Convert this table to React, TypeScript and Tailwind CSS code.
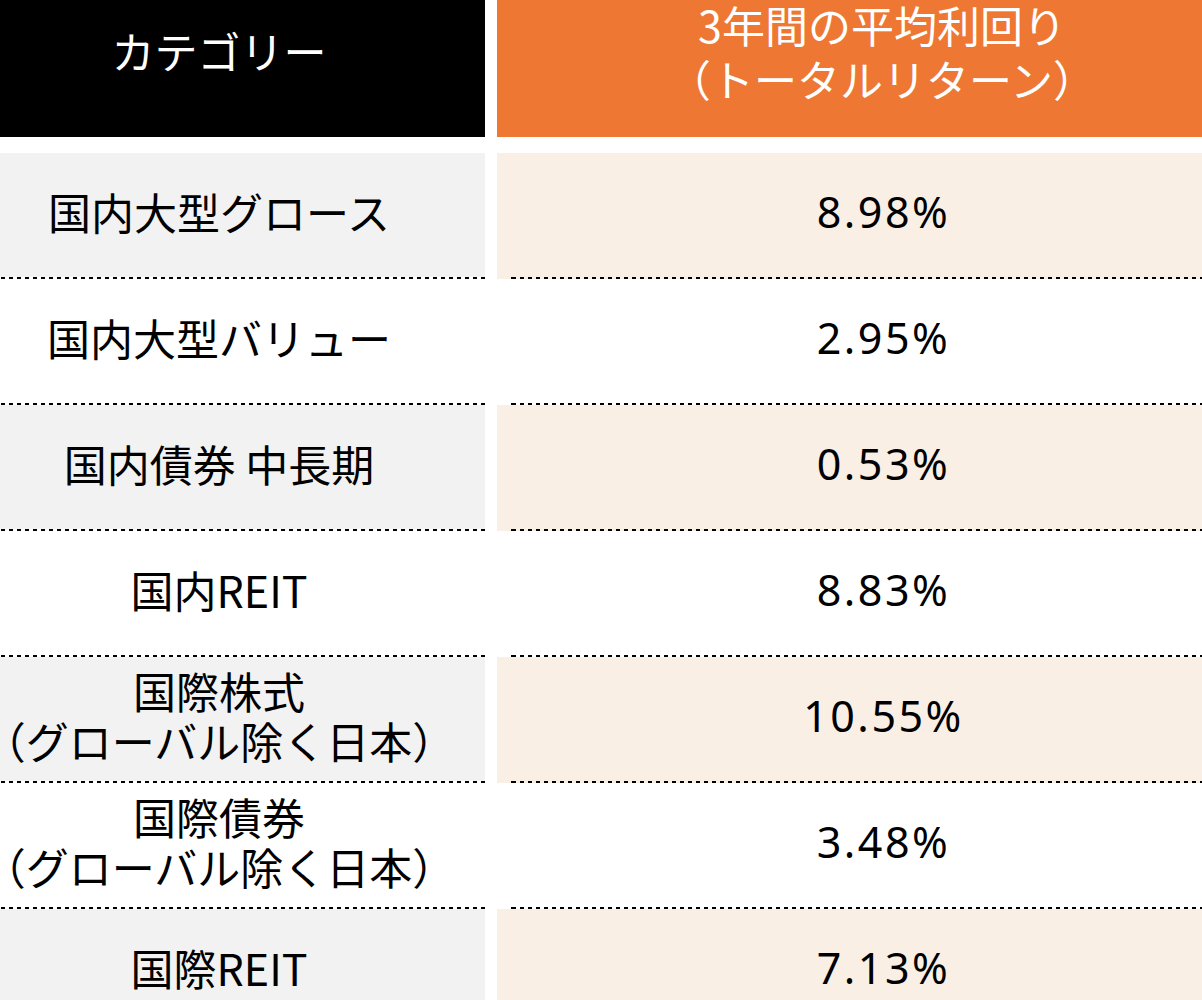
const rows: { name: string[]; value: string }[] = [
  { name: ["国内大型グロース"], value: "8.98%" },
  { name: ["国内大型バリュー"], value: "2.95%" },
  { name: ["国内債券 中長期"], value: "0.53%" },
  { name: ["国内REIT"], value: "8.83%" },
  { name: ["国際株式", "（グローバル除く日本）"], value: "10.55%" },
  { name: ["国際債券", "（グローバル除く日本）"], value: "3.48%" },
  { name: ["国際REIT"], value: "7.13%" },
];

const Dash = ({ className = "" }: { className?: string }) => (
  <div
    className={
      "h-[2px] bg-[image:repeating-linear-gradient(90deg,#000_0_4px,transparent_4px_8px)] bg-[position:1px_0] " +
      className
    }
  />
);

const App = () => {
  return (
    <div className="w-[1202px] h-[1000px] overflow-hidden bg-white font-['Noto_Sans_CJK_JP','Noto_Sans',sans-serif] text-[43px] text-black">
      <div className="grid grid-cols-[485px_705px] gap-x-[12px]">
        <div className="h-[137px] bg-black text-white flex items-center justify-center pr-[47px] pb-[38px] leading-[52px]">
          カテゴリー
        </div>
        <div className="h-[137px] bg-[#ee7733] text-white flex flex-col items-center justify-center pl-[65px] pb-[36px] leading-[54px]">
          <div className="whitespace-nowrap">3年間の平均利回り</div>
          <div className="whitespace-nowrap">（トータルリターン）</div>
        </div>
      </div>
      <div className="mt-[16px] grid grid-cols-[485px_705px] gap-x-[12px]">
        {rows.map((row, i) => {
          const shaded = i % 2 === 0;
          return (
            <div key={i} className="contents">
              <div className="flex flex-col">
                <div
                  className={
                    shaded
                      ? "h-[124px] bg-[#f2f2f2] flex flex-col items-center justify-center pr-[47px] pb-[8px] leading-[50px]"
                      : "h-[124px] bg-white flex flex-col items-center justify-center pr-[47px] pb-[8px] leading-[50px]"
                  }
                >
                  {row.name.map((line) => (
                    <div key={line} className="whitespace-nowrap">
                      {line}
                    </div>
                  ))}
                </div>
                <Dash />
              </div>
              <div className={shaded ? "flex flex-col bg-[#f9efe5]" : "flex flex-col bg-white"}>
                <div className="h-[124px] flex items-center justify-center pl-[68px] pb-[6px] font-['Noto_Sans','Noto_Sans_CJK_JP',sans-serif] tracking-[2.5px]">
                  {row.value}
                </div>
                <Dash className="ml-[14px]" />
              </div>
            </div>
          );
        })}
      </div>
    </div>
  );
};

export default App;
